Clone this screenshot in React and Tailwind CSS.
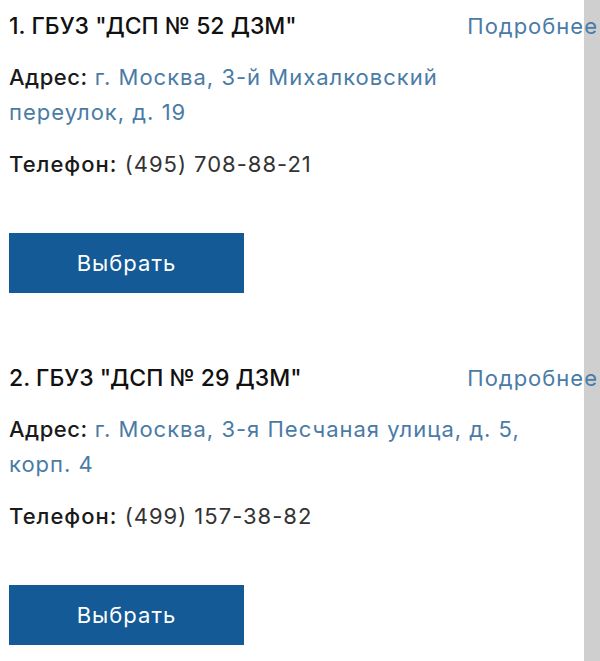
const clinics = [
  {
    id: 1,
    name: 'ГБУЗ "ДСП № 52 ДЗМ"',
    address: "г. Москва, 3-й Михалковский переулок, д. 19",
    phone: "(495) 708-88-21",
  },
  {
    id: 2,
    name: 'ГБУЗ "ДСП № 29 ДЗМ"',
    address: "г. Москва, 3-я Песчаная улица, д. 5, корп. 4",
    phone: "(499) 157-38-82",
  },
];

const ClinicCard = ({ clinic }) => {
  const { id, name, address, phone } = clinic;

  return (
    <article className="pb-[69px]">
      <div className="flex items-center justify-between leading-[32px]">
        <h3 className="text-[23px] font-medium text-[#111]">
          {id}. {name}
        </h3>
        <a href="#" className="-mr-[14px] text-[22px] tracking-[1px] text-[#4a7ba6]">
          Подробнее
        </a>
      </div>
      <p className="mt-[18px] pr-[40px] text-[22px] leading-[35px] tracking-[1px] text-[#4a7ba6]">
        <span className="font-medium tracking-[0.5px] text-[#1a1a1a]">Адрес:</span> {address}
      </p>
      <p className="mt-[17px] text-[22px] leading-[35px] tracking-[1px] text-[#333]">
        <span className="font-medium tracking-[1px] text-[#1a1a1a]">Телефон:</span> {phone}
      </p>
      <button className="mt-[51px] h-[60px] w-[235px] bg-[#135a97] text-[22px] tracking-[1px] text-white">
        Выбрать
      </button>
    </article>
  );
};

export default function App() {
  return (
    <div className="h-[661px] overflow-hidden bg-[linear-gradient(to_right,#ffffff_584px,#cfcfcf_584px)] font-['Inter',sans-serif]">
      <div className="w-[584px] pl-[9px] pt-[10px]">
        {clinics.map((clinic) => (
          <ClinicCard key={clinic.id} clinic={clinic} />
        ))}
      </div>
    </div>
  );
}
